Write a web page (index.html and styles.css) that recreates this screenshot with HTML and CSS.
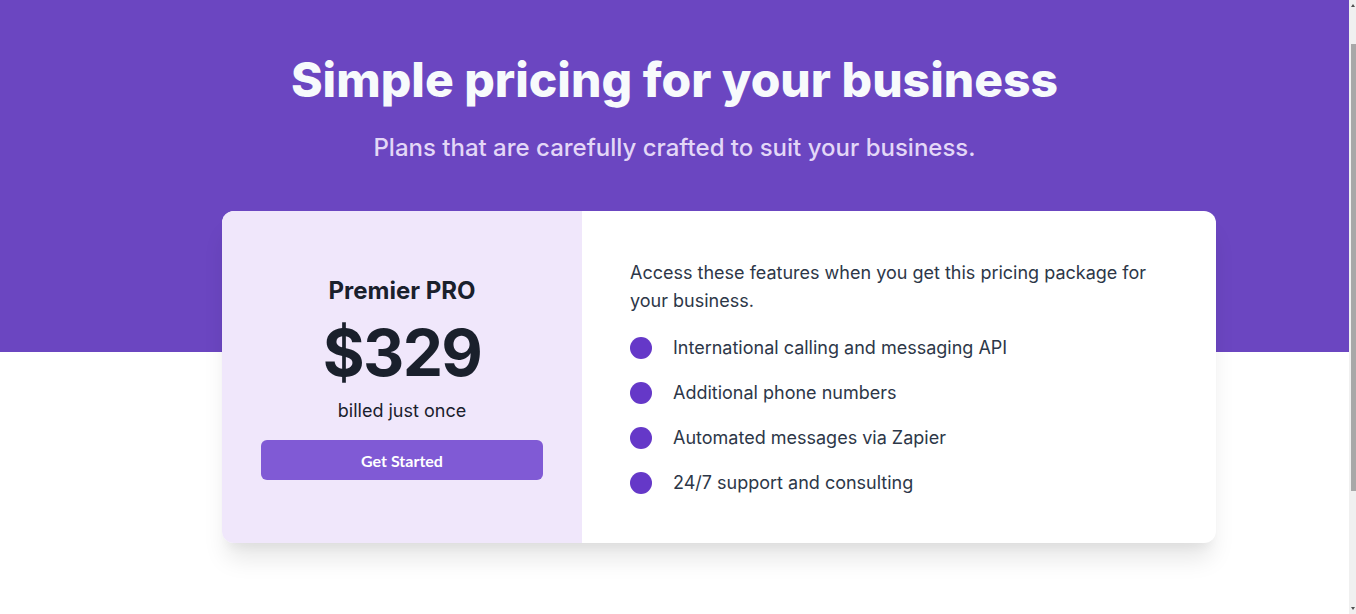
FILE: index.html
```html
<!DOCTYPE html>
<html lang="en">
<head>
<meta charset="utf-8">
<title>Simple pricing</title>
<link rel="stylesheet" href="styles.css">
</head>
<body>
<div class="page">
  <main class="main">
    <header class="hero">
      <h1 class="hero-title">Simple pricing for your business</h1>
      <p class="hero-sub">Plans that are carefully crafted to suit your business.</p>
    </header>
    <section class="card-row">
      <div class="card">
        <div class="plan">
          <h2 class="plan-name">Premier PRO</h2>
          <div class="plan-price">$329</div>
          <div class="plan-note">billed just once</div>
          <button class="plan-btn" type="button">Get Started</button>
        </div>
        <div class="features">
          <p class="features-intro">Access these features when you get this pricing package for your business.</p>
          <ul class="feature-list">
            <li class="feature"><span class="dot"></span><span>International calling and messaging API</span></li>
            <li class="feature"><span class="dot"></span><span>Additional phone numbers</span></li>
            <li class="feature"><span class="dot"></span><span>Automated messages via Zapier</span></li>
            <li class="feature"><span class="dot"></span><span>24/7 support and consulting</span></li>
          </ul>
        </div>
      </div>
    </section>
  </main>
  <div class="scrollbar" aria-hidden="true">
    <span class="sb-arrow sb-up"></span>
    <span class="sb-thumb"></span>
    <span class="sb-fill"></span>
    <span class="sb-arrow sb-down"></span>
  </div>
</div>
</body>
</html>
```
FILE: styles.css
```css
html, body {
  margin: 0;
  padding: 0;
  overflow: hidden;
}
body {
  font-family: Inter, "Liberation Sans", sans-serif;
  color: #1a202c;
  background: #ffffff;
}
.page {
  display: flex;
  height: 614px;
}
.main {
  flex: 1;
  min-width: 0;
  background: linear-gradient(to bottom, #6b46c1 0, #6b46c1 352px, #ffffff 352px);
  padding-top: 56px;
}
.hero {
  text-align: center;
}
.hero-title {
  margin: 0;
  font-size: 48px;
  line-height: 48px;
  font-weight: 800;
  color: #f7fafc;
}
.hero-sub {
  margin: 28px 0 0;
  font-size: 24px;
  line-height: 32px;
  font-weight: 500;
  color: #e3d7f7;
}
.card-row {
  display: flex;
  padding-left: 222px;
  margin-top: 47px;
}
.card {
  width: 994px;
  height: 332px;
  display: flex;
  border-radius: 12px;
  overflow: hidden;
  background: #ffffff;
  box-shadow: 0 20px 25px -5px rgba(0, 0, 0, 0.1), 0 10px 10px -5px rgba(0, 0, 0, 0.04);
}
.plan {
  width: 360px;
  box-sizing: border-box;
  padding: 1px 39px 0;
  background: #f0e7fb;
  display: flex;
  flex-direction: column;
  align-items: stretch;
  justify-content: center;
  text-align: center;
}
.plan-name {
  margin: 0;
  font-size: 24px;
  line-height: 32px;
  font-weight: 700;
  color: #1a202c;
}
.plan-price {
  margin-top: 14px;
  font-size: 64px;
  line-height: 64px;
  font-weight: 700;
  letter-spacing: -1.6px;
  color: #1a202c;
}
.plan-note {
  margin-top: 12px;
  font-size: 18px;
  line-height: 28px;
  font-weight: 400;
  color: #1a202c;
}
.plan-btn {
  margin-top: 15px;
  height: 40px;
  border: 0;
  border-radius: 6px;
  background: #805ad5;
  color: #ffffff;
  font-family: Lato, "Open Sans", sans-serif;
  font-size: 16px;
  font-weight: 700;
}
.features {
  flex: 1;
  padding: 48px;
}
.features-intro {
  margin: 0;
  font-size: 18px;
  line-height: 28px;
  color: #2d3748;
}
.feature-list {
  list-style: none;
  margin: 19px 0 0;
  padding: 0;
  display: flex;
  flex-direction: column;
  gap: 17px;
}
.feature {
  display: flex;
  align-items: center;
  gap: 21px;
  font-size: 18px;
  line-height: 28px;
  color: #2d3748;
}
.dot {
  width: 22px;
  height: 22px;
  border-radius: 50%;
  background: #6538c8;
  flex: none;
}
.scrollbar {
  width: 7px;
  flex: none;
  background: #f0f0f0;
  display: flex;
  flex-direction: column;
  align-items: flex-end;
}
.sb-arrow {
  width: 0;
  height: 0;
  border-left: 2px solid transparent;
  border-right: 2px solid transparent;
  margin-right: 1px;
}
.sb-up {
  margin-top: 4px;
  border-bottom: 3px solid #505050;
}
.sb-down {
  margin-bottom: 4px;
  border-top: 3px solid #505050;
}
.sb-thumb {
  width: 5px;
  height: 447px;
  margin-top: 37px;
  background: #a8a8a8;
}
.sb-fill {
  flex: 1;
}
```
